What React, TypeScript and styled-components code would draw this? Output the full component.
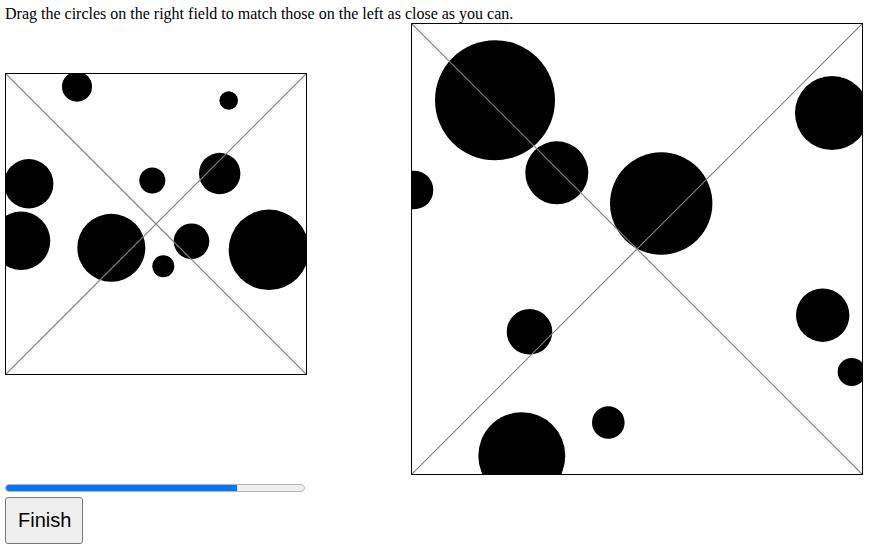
import React from "react";
import styled, { createGlobalStyle } from "styled-components";

const GlobalStyle = createGlobalStyle`
  html, body { margin: 0; padding: 0; background: #fff; }
  body { margin: 5px; font-family: "Liberation Serif", "Times New Roman", serif; font-size: 16px; color: #000; }
`;

const Page = styled.div`
  display: flex;
  flex-direction: column;
`;

const Instructions = styled.p`
  margin: 0;
  line-height: 18px;
  height: 18px;
`;

const Row = styled.div`
  display: flex;
  align-items: flex-start;
  gap: 104px;
`;

const LeftColumn = styled.div`
  display: flex;
  flex-direction: column;
  align-items: flex-start;
  margin-top: 50px;
`;

const Field = styled.svg<{ $size: number }>`
  display: block;
  width: ${(p) => p.$size}px;
  height: ${(p) => p.$size}px;
  border: 1px solid #000;
  background: #fff;
  overflow: hidden;
`;

const ProgressTrack = styled.div`
  margin-top: 109px;
  width: 298px;
  height: 6px;
  border: 1px solid #b5b5b5;
  border-radius: 4px;
  background: #efefef;
  overflow: hidden;
`;

const ProgressFill = styled.div`
  height: 100%;
  background: #0075ff;
  border-radius: 4px 0 0 4px;
  margin: -1px 0 0 -1px;
  padding: 1px 0;
`;

const FinishButton = styled.button`
  margin-top: 5px;
  font-family: "Liberation Sans", Arial, sans-serif;
  font-size: 20px;
  line-height: 23px;
  padding: 11px 11px 11px 12px;
  background: #efefef;
  border: 1px solid #767676;
  border-radius: 3px;
  color: #000;
`;

type C = [number, number, number];

const leftCircles: C[] = [
  [71, 12.7, 15],
  [222.7, 26.5, 9.3],
  [22.7, 109.7, 24.7],
  [146.3, 106.5, 13],
  [213.7, 99.5, 20.7],
  [15.1, 166.8, 29.2],
  [105.3, 173.8, 34],
  [185.5, 167.3, 17.8],
  [157.3, 192.2, 11],
  [262.9, 175.8, 40.2],
];

const rightCircles: C[] = [
  [83, 76.2, 60],
  [420, 89, 37],
  [144.8, 148.8, 31.5],
  [2, 166, 19.3],
  [249.2, 179.5, 51.2],
  [410.7, 291.2, 26.7],
  [439.7, 348, 14],
  [117.5, 307.8, 22.8],
  [196.3, 398.5, 16.3],
  [109.8, 431.8, 43.5],
];

function Board({ size, circles }: { size: number; circles: C[] }) {
  return (
    <Field $size={size} viewBox={`0 0 ${size} ${size}`}>
      {circles.map(([cx, cy, r], i) => (
        <circle key={i} cx={cx} cy={cy} r={r} fill="#000" />
      ))}
      <line x1={0} y1={0} x2={size} y2={size} stroke="#808080" strokeWidth={1.2} />
      <line x1={size} y1={0} x2={0} y2={size} stroke="#808080" strokeWidth={1.2} />
    </Field>
  );
}

export default function App() {
  const progress = 0.778;
  return (
    <>
      <GlobalStyle />
      <Page>
        <Instructions>Drag the circles on the right field to match those on the left as close as you can.</Instructions>
        <Row>
          <LeftColumn>
            <Board size={300} circles={leftCircles} />
            <ProgressTrack>
              <ProgressFill style={{ width: `${progress * 100}%` }} />
            </ProgressTrack>
            <FinishButton>Finish</FinishButton>
          </LeftColumn>
          <Board size={450} circles={rightCircles} />
        </Row>
      </Page>
    </>
  );
}
